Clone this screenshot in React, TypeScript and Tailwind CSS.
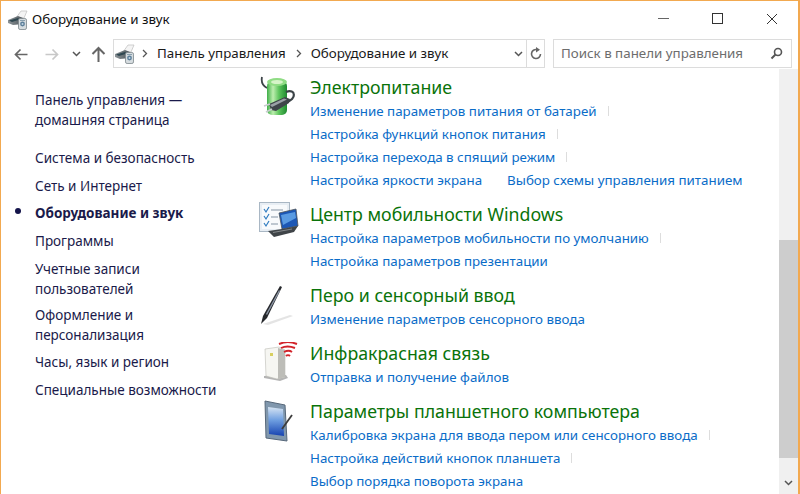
import React from "react";

const font = { fontFamily: '"Noto Sans", sans-serif' };

function DeviceIcon({ id }: { id: string }) {
  return (
    <svg width="20" height="20" viewBox="0 0 20 20" className="shrink-0">
      <defs>
        <linearGradient id={id} x1="0" x2="1" y1="0" y2="0">
          <stop offset="0" stopColor="#8b9397" />
          <stop offset="1" stopColor="#4e565b" />
        </linearGradient>
      </defs>
      <path d="M8 8 L13 1 L19 1 L16 8 Z" fill="#f4f4f4" stroke="#bdbdbd" strokeWidth="0.7" />
      <path d="M0 10 L10 6 L15 8 L15 14 L5 15 L0 13 Z" fill={`url(#${id})`} />
      <path d="M1 10.5 L10 8 L12 9.5 L4 12 Z" fill="#2f4750" />
      <rect x="10.5" y="8.5" width="8" height="11" rx="1.6" fill="#d6dcdf" stroke="#7c868c" strokeWidth="0.8" />
      <circle cx="14.5" cy="14" r="2.4" fill="#5c7f9a" />
      <circle cx="14.5" cy="14" r="1" fill="#c4d6e2" />
      <rect x="12" y="10" width="5" height="1" fill="#8aa0ae" />
    </svg>
  );
}

function Arrow({ dir, color }: { dir: "left" | "right"; color: string }) {
  const d = dir === "left" ? "M13.5 6.5H1.5 M6.5 1.5 L1.5 6.5 L6.5 11.5" : "M0.5 6.5H12.5 M7.5 1.5 L12.5 6.5 L7.5 11.5";
  return (
    <svg width="14" height="13" viewBox="0 0 14 13" className="shrink-0">
      <path d={d} fill="none" stroke={color} strokeWidth="1.7" />
    </svg>
  );
}

function UpArrow() {
  return (
    <svg width="15" height="16" viewBox="0 0 15 16" className="shrink-0">
      <path d="M7.5 16V2 M1.5 8 L7.5 2 L13.5 8" fill="none" stroke="#666" strokeWidth="2" />
    </svg>
  );
}

function Chevron({ className = "" }: { className?: string }) {
  return (
    <svg width="9" height="6" viewBox="0 0 9 6" className={className}>
      <path d="M1 1 L4.5 4.5 L8 1" fill="none" stroke="#555" strokeWidth="1.5" />
    </svg>
  );
}

function Crumb() {
  return (
    <svg width="6" height="9" viewBox="0 0 6 9" className="shrink-0">
      <path d="M1 1 L4.5 4.5 L1 8" fill="none" stroke="#555" strokeWidth="1.3" />
    </svg>
  );
}

function PowerIcon() {
  return (
    <svg width="36" height="42" viewBox="0 0 36 42">
      <defs>
        <linearGradient id="bat" x1="0" x2="1" y1="0" y2="0">
          <stop offset="0" stopColor="#3fae48" />
          <stop offset="0.3" stopColor="#bdeeae" />
          <stop offset="0.6" stopColor="#5cc45c" />
          <stop offset="1" stopColor="#1f8a30" />
        </linearGradient>
      </defs>
      <path d="M2 2 C1 7 3 11 7 13" fill="none" stroke="#3c4448" strokeWidth="1.8" />
      <rect x="7" y="6" width="20" height="34" rx="5" fill="url(#bat)" />
      <ellipse cx="17" cy="7" rx="10" ry="4" fill="#8fdc84" />
      <ellipse cx="17" cy="7" rx="6" ry="2" fill="#d6f4c8" />
      <path d="M26 17 C36 13 37 25 26 27" fill="none" stroke="#3c4448" strokeWidth="2.2" />
      <path d="M9 29 L25 22 L30 24 L29 28 L16 36 L11 35 Z" fill="#3e4549" />
      <path d="M10 30 L24 23.5 L27 24.5 L12 32 Z" fill="#9aa1a6" />
      <path d="M10 29 L4 31 M12 34 L6 37" stroke="#c8ccce" strokeWidth="1.8" />
    </svg>
  );
}

function MobilityIcon() {
  return (
    <svg width="40" height="36" viewBox="0 0 40 36">
      <rect x="0.5" y="0.5" width="30" height="29" fill="#e8eef4" stroke="#a9b7c4" />
      <rect x="3" y="3" width="25" height="24" fill="#f8fafc" />
      <path d="M5 7 L7 10 L10 5 M5 14 L7 17 L10 12 M5 21 L7 24 L10 19" fill="none" stroke="#2e7bc0" strokeWidth="1.2" />
      <path d="M12 8H24 M12 15H19 M12 22H19" stroke="#aab6c1" strokeWidth="1.4" />
      <path d="M20 11 L37 7 L39 24 L23 27 Z" fill="#1c57b5" stroke="#4d5357" strokeWidth="0.8" />
      <path d="M22 13 L36 10 L37 16 L24 23 Z" fill="#5a9be2" />
      <path d="M9 29 L23 27 L39 24 L35 30 L15 35 Z" fill="#3f4448" />
      <path d="M14 30.5 L33 27" stroke="#85898c" strokeWidth="1" />
    </svg>
  );
}

function PenIcon() {
  return (
    <svg width="34" height="40" viewBox="0 0 34 40">
      <path d="M3 39 L30 30 L33 31 L8 40 Z" fill="#d8d8d8" opacity="0.7" />
      <path d="M20 1 L22 2 L7 33 L1 39 L3 31 Z" fill="#26282c" />
      <path d="M19 5 L20 6 L7 30 L6 29 Z" fill="#8a94a3" />
    </svg>
  );
}

function InfraredIcon() {
  return (
    <svg width="34" height="40" viewBox="0 0 34 40">
      <path d="M0 36 L16 39 L24 36 L22 33 L0 34 Z" fill="#777" opacity="0.55" />
      <path d="M1 7 L15 5 L21 8 L21 35 L13 37 L2 34 Z" fill="#f6f6f2" stroke="#bcbcb6" strokeWidth="0.6" />
      <path d="M14 6 L21 8 L21 35 L14 37 Z" fill="#bdbdb8" />
      <rect x="6" y="11" width="3" height="3" fill="#d8cf60" />
      <path d="M15 2 C21 -0.5 28 0 33 2 M17 6 C21 4 26 4 31 6 M20 10 C23 8.5 26 8.5 28 10 M22 14 C23 13 25 13 26 14" fill="none" stroke="#d2232a" strokeWidth="1.9" />
    </svg>
  );
}

function TabletIcon() {
  return (
    <svg width="30" height="42" viewBox="0 0 30 42">
      <defs>
        <linearGradient id="tab" x1="0" x2="0" y1="0" y2="1">
          <stop offset="0" stopColor="#d6e4f3" />
          <stop offset="0.45" stopColor="#6f9fe0" />
          <stop offset="1" stopColor="#1642b0" />
        </linearGradient>
      </defs>
      <path d="M1 1 L21 5 L23 41 L2 38 Z" fill="#8097ad" stroke="#57687a" />
      <path d="M4 7 L19 9 L20 36 L5 34 Z" fill="url(#tab)" />
      <path d="M28 15 L18 29" stroke="#3c3c3c" strokeWidth="1.8" />
    </svg>
  );
}

const sideClass = "text-[13.5px] leading-[20px] text-[#1a1a4a]";

function Section({ icon, title, links, top, iconClass }: { icon: React.ReactNode; title: string; links: { text: string; tick?: number; extra?: string }[][]; top: string; iconClass: string }) {
  return (
    <section className={`flex ${top}`}>
      <div className={`w-[60px] shrink-0 ${iconClass}`}>{icon}</div>
      <div className="flex flex-col">
        <h2 className="text-[17.75px] leading-[25px] font-normal text-[#0a730a] whitespace-nowrap">{title}</h2>
        {links.map((row, i) => (
          <div key={i} className="flex h-[23px] items-center whitespace-nowrap text-[13.35px] text-[#0a6cc8]">
            {row.map((l, j) => (
              <React.Fragment key={j}>
                <span className={l.extra}>{l.text}</span>
                {l.tick !== undefined && <span className="w-px h-[10px] bg-[#dddddd] -translate-y-[1px]" style={{ marginLeft: l.tick }} />}
              </React.Fragment>
            ))}
          </div>
        ))}
      </div>
    </section>
  );
}

export default function App() {
  return (
    <div className="w-[800px] h-[494px] overflow-hidden bg-white flex flex-col border-x border-t border-[#f2a950] border-r-2 text-[#1a1a1a]" style={font}>
      <header className="h-[37px] shrink-0 flex items-center">
        <div className="ml-[7px] mr-[4px]"><DeviceIcon id="d1" /></div>
        <span className="text-[13.35px] text-[#111] -mt-[1px]">Оборудование и звук</span>
        <div className="ml-auto flex items-center -mt-[2px]">
          <div className="w-[11px] h-px bg-[#666] mr-[43px]" />
          <div className="w-[11px] h-[11px] border border-[#333] mr-[43px]" />
          <svg width="12" height="12" viewBox="0 0 12 12" className="mr-[20px]"><path d="M1 1 L11 11 M11 1 L1 11" stroke="#333" strokeWidth="1" /></svg>
        </div>
      </header>

      <nav className="h-[31px] shrink-0 flex items-center">
        <div className="ml-[13px] mt-[1px]"><Arrow dir="left" color="#666" /></div>
        <div className="ml-[17px] mt-[1px]"><Arrow dir="right" color="#c8c8c8" /></div>
        <Chevron className="ml-[13px]" />
        <div className="ml-[10px]"><UpArrow /></div>
        <div className="ml-[7px] w-[414px] h-[29px] border border-[#dcdcdc] flex items-center">
          <div className="ml-[1px]"><DeviceIcon id="d2" /></div>
          <div className="ml-[7px]"><Crumb /></div>
          <span className="ml-[9px] text-[13.35px]">Панель управления</span>
          <div className="ml-[10px]"><Crumb /></div>
          <span className="ml-[9px] text-[13.35px]">Оборудование и звук</span>
          <Chevron className="ml-auto mr-[3px]" />
        </div>
        <div className="w-[18px] h-[29px] border border-l-0 border-[#dcdcdc] flex items-center justify-center">
          <svg width="14" height="14" viewBox="0 0 14 14"><path d="M11.5 7 A4.5 4.5 0 1 1 8 2.6" fill="none" stroke="#666" strokeWidth="1.6" /><path d="M7 0 L11 2.8 L7 5.5 Z" fill="#666" /></svg>
        </div>
        <div className="ml-[8px] w-[239px] h-[29px] border border-[#dcdcdc] flex items-center pl-[7px] pr-[8px]">
          <span className="text-[13.35px] text-[#6d6d6d] whitespace-nowrap">Поиск в панели управления</span>
          <svg width="13" height="13" viewBox="0 0 13 13" className="ml-auto"><circle cx="8" cy="5" r="3.5" fill="none" stroke="#555" strokeWidth="1.6" /><path d="M5.5 7.5 L1.5 11.5" stroke="#555" strokeWidth="2" /></svg>
        </div>
      </nav>

      <div className="flex flex-1 min-h-0">
        <aside className="w-[249px] shrink-0 pl-[34px] pt-[21px] relative">
          <p className={`${sideClass} mb-[18px]`}>Панель управления —<br />домашняя страница</p>
          <ul className="flex flex-col">
            <li className={`${sideClass} mb-[8px]`}>Система и безопасность</li>
            <li className={`${sideClass} mb-[7px]`}>Сеть и Интернет</li>
            <li className={`${sideClass} mb-[8px] font-bold relative`}>
              <span className="absolute -left-[20px] top-[5px] w-[6px] h-[6px] rounded-full bg-[#14144a]" />
              Оборудование и звук
            </li>
            <li className={`${sideClass} mb-[8px]`}>Программы</li>
            <li className={`${sideClass} mb-[6px]`}>Учетные записи<br />пользователей</li>
            <li className={`${sideClass} mb-[7px]`}>Оформление и<br />персонализация</li>
            <li className={`${sideClass} mb-[8px]`}>Часы, язык и регион</li>
            <li className={sideClass}>Специальные возможности</li>
          </ul>
        </aside>

        <main className="flex-1 min-w-0 overflow-hidden flex flex-col pt-[6px]">
          <Section top="" iconClass="pl-[10px]" icon={<PowerIcon />} title="Электропитание" links={[
            [{ text: "Изменение параметров питания от батарей", tick: 11 }],
            [{ text: "Настройка функций кнопок питания", tick: 11 }],
            [{ text: "Настройка перехода в спящий режим", tick: 11 }],
            [{ text: "Настройка яркости экрана" }, { text: "Выбор схемы управления питанием", extra: "ml-[25px]" }],
          ]} />
          <Section top="mt-[10px]" iconClass="pl-[9px]" icon={<MobilityIcon />} title="Центр мобильности Windows" links={[
            [{ text: "Настройка параметров мобильности по умолчанию", tick: 11 }],
            [{ text: "Настройка параметров презентации" }],
          ]} />
          <Section top="mt-[10px]" iconClass="pl-[10px] mt-[2px]" icon={<PenIcon />} title="Перо и сенсорный ввод" links={[
            [{ text: "Изменение параметров сенсорного ввода" }],
          ]} />
          <Section top="mt-[10px]" iconClass="pl-[14px] mt-[1px]" icon={<InfraredIcon />} title="Инфракрасная связь" links={[
            [{ text: "Отправка и получение файлов" }],
          ]} />
          <Section top="mt-[10px]" iconClass="pl-[14px] mt-[1px]" icon={<TabletIcon />} title="Параметры планшетного компьютера" links={[
            [{ text: "Калибровка экрана для ввода пером или сенсорного ввода", tick: 11 }],
            [{ text: "Настройка действий кнопок планшета", tick: 11 }],
            [{ text: "Выбор порядка поворота экрана" }],
          ]} />
        </main>

        <div className="w-[19px] shrink-0 bg-[#f0f0f0] flex flex-col">
          <div className="h-[171px] shrink-0" />
          <div className="h-[218px] shrink-0 bg-[#cdcdcd]" />
          <div className="flex-1 flex items-end justify-center pb-[8px]"><Chevron /></div>
        </div>
      </div>
    </div>
  );
}
